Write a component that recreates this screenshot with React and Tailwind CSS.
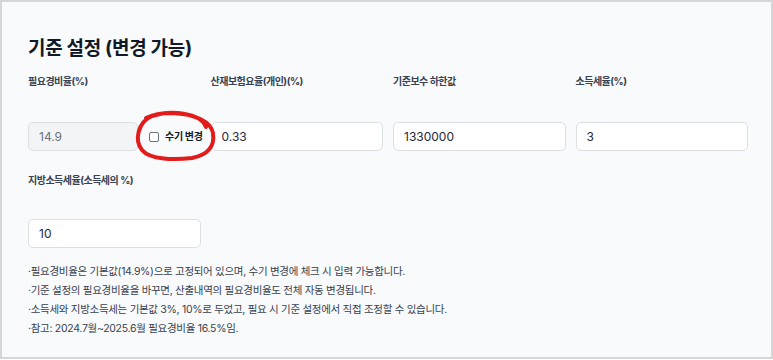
import React from "react";

const font = { fontFamily: 'Inter, "Noto Sans CJK KR", sans-serif' };

function Label({ children }) {
  return (
    <div className="text-[10px] font-bold tracking-[-0.5px] text-[#374151] h-[16px] leading-[16px] whitespace-nowrap">
      {children}
    </div>
  );
}

function Field({ label, value, gap = "mt-[33px]" }) {
  return (
    <div className="flex flex-col">
      <Label>{label}</Label>
      <div className={gap}>
        <input
          readOnly
          value={value}
          className="w-full h-[29px] rounded-[5px] border border-[#dcdfe4] bg-white px-[10px] text-[12px] text-[#1f2937] outline-none"
        />
      </div>
    </div>
  );
}

export default function App() {
  return (
    <div className="w-[773px] h-[360px] bg-white" style={font}>
      <div className="relative w-[773px] h-[359px] border-2 border-[#d6d6d6] bg-[#f9fafb] pl-[26px] pr-[23px] pt-[33px]">
        <h2 className="text-[19px] font-bold leading-[28px] tracking-[-0.3px] text-[#111827]">기준 설정 (변경 가능)</h2>
        <div className="mt-[10px] grid grid-cols-4 gap-x-[10px]">
          <div className="flex flex-col">
            <Label>필요경비율(%)</Label>
            <div className="mt-[33px] flex items-center">
              <input
                readOnly
                value="14.9"
                className="w-[110px] shrink-0 h-[29px] rounded-[5px] border border-[#dcdfe4] bg-[#f3f4f6] px-[10px] text-[12px] text-[#6b7280] outline-none"
              />
              <span className="ml-[11px] shrink-0 w-[10px] h-[10px] rounded-[2px] border border-[#6b7280] bg-white" />
              <span className="ml-[6px] whitespace-nowrap text-[10px] font-bold tracking-[-0.3px] text-[#111827]">수기 변경</span>
            </div>
          </div>
          <Field label="산재보험요율(개인)(%)" value="0.33" />
          <Field label="기준보수 하한값" value="1330000" />
          <Field label="소득세율(%)" value="3" />
        </div>
        <div className="mt-[21px] grid grid-cols-4 gap-x-[10px]">
          <Field label="지방소득세율(소득세의 %)" value="10" gap="mt-[31px]" />
        </div>
        <div className="mt-[14px] text-[10.5px] leading-[19px] tracking-[-0.3px] text-[#374151]">
          <p>·필요경비율은 기본값(14.9%)으로 고정되어 있으며, 수기 변경에 체크 시 입력 가능합니다.</p>
          <p>·기준 설정의 필요경비율을 바꾸면, 산출내역의 필요경비율도 전체 자동 변경됩니다.</p>
          <p>·소득세와 지방소득세는 기본값 3%, 10%로 두었고, 필요 시 기준 설정에서 직접 조정할 수 있습니다.</p>
          <p>·참고: 2024.7월~2025.6월 필요경비율 16.5%임.</p>
        </div>
        <svg
          className="absolute left-[-2px] top-[-2px] pointer-events-none"
          width="773"
          height="360"
          viewBox="0 0 773 360"
        >
          <path
            d="M206 127 C 200 112, 170 110, 152 116 C 138 122, 134 140, 142 150 C 150 160, 175 160, 192 158 C 208 155, 215 146, 213 133 C 211 122, 196 114, 172 113 C 160 113, 150 116, 146 118"
            fill="none"
            stroke="#e21b1b"
            strokeWidth="4"
            strokeLinecap="round"
          />
        </svg>
      </div>
    </div>
  );
}
